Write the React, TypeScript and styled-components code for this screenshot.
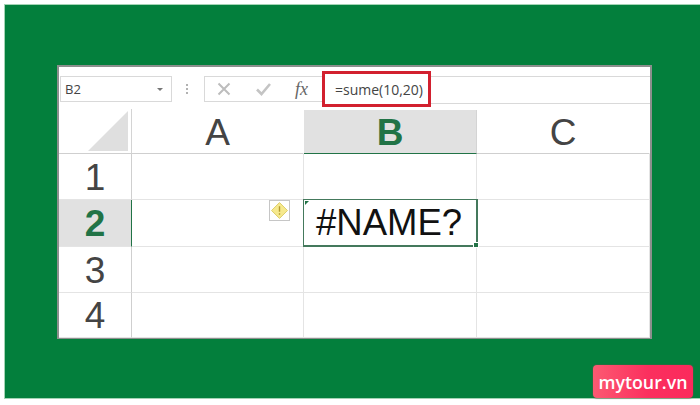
import React from 'react';
import styled, { createGlobalStyle } from 'styled-components';

const GlobalStyle = createGlobalStyle`
  html, body {
    margin: 0;
    padding: 0;
    background: #fff;
  }
`;

const Page = styled.div`
  box-sizing: border-box;
  width: 700px;
  height: 405px;
  padding: 4px 0 0 4px;
  background: #fff;
  overflow: hidden;
`;

const Banner = styled.div`
  position: relative;
  box-sizing: border-box;
  height: 395px;
  padding: 60px 44px 0 52px;
  background: #037f3c;
  border: 1px solid #a3d4b4;
  border-right: 0;
`;

const Sheet = styled.div`
  box-sizing: border-box;
  width: 595px;
  height: 274px;
  display: flex;
  flex-direction: column;
  background: #fff;
  border: 1px solid #8c8f8d;
  border-width: 2px 2px 1px 2px;
`;

const FormulaBar = styled.div`
  height: 42px;
  padding-top: 9px;
  box-sizing: border-box;
  display: flex;
  align-items: flex-start;
  flex: none;
  font-family: 'Open Sans', 'Liberation Sans', sans-serif;
`;

const NameBox = styled.div`
  box-sizing: border-box;
  width: 112px;
  height: 26px;
  margin-left: 1px;
  padding: 0 8px 0 4px;
  display: flex;
  align-items: center;
  justify-content: space-between;
  border: 1px solid #d9d9d9;
  font-size: 13px;
  color: #444;
`;

const Caret = styled.span`
  width: 0;
  height: 0;
  border-left: 3px solid transparent;
  border-right: 3px solid transparent;
  border-top: 3px solid #777;
`;

const Grip = styled.svg`
  width: 3px;
  height: 10px;
  margin: 8px 15px 0 14px;
  flex: none;
`;

const Buttons = styled.div`
  box-sizing: border-box;
  width: 118px;
  height: 26px;
  padding: 0 0 0 12px;
  display: flex;
  align-items: center;
  gap: 25px;
  flex: none;
  border: 1px solid #d9d9d9;
  border-right: 0;
`;

const Fx = styled.span`
  margin-left: -1px;
  font-family: 'Liberation Serif', serif;
  font-style: italic;
  font-size: 18px;
  color: #666;
`;

const InputTrack = styled.div`
  position: relative;
  flex: 1;
  height: 26px;
  border-top: 1px solid #d9d9d9;
  border-bottom: 1px solid #d9d9d9;
`;

const Formula = styled.div`
  position: absolute;
  left: 0;
  top: -6px;
  box-sizing: border-box;
  width: 109px;
  height: 36px;
  padding-left: 10px;
  display: flex;
  align-items: center;
  background: #fff;
  border: 3px solid #d2202f;
  font-size: 14px;
  color: #444;
  white-space: nowrap;
`;

const Grid = styled.div`
  flex: 1;
  display: grid;
  grid-template-columns: 73px 172px 173px 1fr;
  grid-template-rows: 45px 46px 47px 46px 1fr;
  font-family: 'Liberation Sans', sans-serif;
  color: #444;
`;

const Corner = styled.div`
  display: flex;
  align-items: flex-end;
  justify-content: flex-end;
  padding: 0 3px 2px 0;
  border-right: 1px solid #d4d4d4;
  border-bottom: 1px solid #cfcfcf;
`;

const ColHead = styled.div<{ $active?: boolean }>`
  box-sizing: border-box;
  margin-top: 1px;
  padding-top: 3px;
  display: flex;
  align-items: center;
  justify-content: center;
  font-size: 37px;
  font-weight: ${(p) => (p.$active ? 700 : 400)};
  color: ${(p) => (p.$active ? '#217346' : '#444')};
  background: ${(p) => (p.$active ? '#e1e1e1' : '#fff')};
  border-right: 1px solid ${(p) => (p.$active ? '#d4d4d4' : '#fff')};
  border-bottom: 1px solid ${(p) => (p.$active ? '#217346' : '#cfcfcf')};
`;

const RowHead = styled.div<{ $active?: boolean }>`
  box-sizing: border-box;
  padding-top: 2px;
  display: flex;
  align-items: center;
  justify-content: center;
  font-size: 37px;
  font-weight: ${(p) => (p.$active ? 700 : 400)};
  color: ${(p) => (p.$active ? '#217346' : '#444')};
  background: ${(p) => (p.$active ? '#e1e1e1' : '#fff')};
  border-right: 1px solid ${(p) => (p.$active ? '#217346' : '#cfcfcf')};
  border-bottom: 1px solid #e4e4e4;
`;

const Cell = styled.div`
  position: relative;
  border-right: 1px solid #e4e4e4;
  border-bottom: 1px solid #e4e4e4;
`;

const Warning = styled.div`
  position: absolute;
  top: 0;
  right: 13px;
  box-sizing: border-box;
  width: 21px;
  height: 21px;
  display: flex;
  align-items: center;
  justify-content: center;
  background: #fff;
  border: 1px solid #c6c6c6;
`;

const SelectedCell = styled.div`
  position: relative;
  z-index: 1;
  box-sizing: border-box;
  margin: -1px 0 0 -1px;
  width: 175px;
  height: 48px;
  padding-left: 12px;
  display: flex;
  align-items: center;
  border: 1px solid #44795c;
  border-bottom-width: 2px;
  border-right-width: 2px;
  font-size: 36.5px;
  color: #111;
  background: #fff;
`;

const ErrorTick = styled.span`
  position: absolute;
  left: 1px;
  top: 1px;
  width: 0;
  height: 0;
  border-top: 4px solid #217346;
  border-right: 4px solid transparent;
`;

const FillHandle = styled.span`
  position: absolute;
  right: -3px;
  bottom: -3px;
  width: 4px;
  height: 4px;
  background: #217346;
  border: 1px solid #fff;
`;

const Badge = styled.div`
  position: absolute;
  right: 7px;
  bottom: 0;
  box-sizing: border-box;
  width: 100px;
  height: 33px;
  display: flex;
  align-items: center;
  justify-content: center;
  border-radius: 4px;
  background: linear-gradient(90deg, #fc5a72 0%, #fb2f5e 55%, #fb2a5c 100%);
  box-shadow: 0 0 1px 1px rgba(90, 90, 70, 0.45);
  font-family: 'Open Sans', 'Liberation Sans', sans-serif;
  font-size: 17.8px;
  font-weight: 600;
  color: #fff;
`;

const columns = ['A', 'B', 'C'];
const rows = [1, 2, 3, 4];

const App: React.FC = () => (
  <Page>
    <GlobalStyle />
    <Banner>
      <Sheet>
        <FormulaBar>
          <NameBox>
            B2
            <Caret />
          </NameBox>
          <Grip viewBox="0 0 3 10">
            <path d="M0 1h3M0 5h3M0 9h3" stroke="#999" strokeWidth="1.4" strokeDasharray="2 1" />
          </Grip>
          <Buttons>
            <svg width="14" height="14" viewBox="0 0 14 14">
              <path d="M1.5 1.5l11 11M12.5 1.5l-11 11" stroke="#bdbdbd" strokeWidth="2" fill="none" />
            </svg>
            <svg width="15" height="14" viewBox="0 0 15 14">
              <path d="M1 7.5l4.5 4.5L14 2" stroke="#c4c4c4" strokeWidth="2.6" fill="none" />
            </svg>
            <Fx>fx</Fx>
          </Buttons>
          <InputTrack>
            <Formula>=sume(10,20)</Formula>
          </InputTrack>
        </FormulaBar>
        <Grid>
          <Corner>
            <svg width="40" height="40" viewBox="0 0 40 40">
              <path d="M40 0v40H0z" fill="#dfdfdf" />
            </svg>
          </Corner>
          {columns.map((c) => (
            <ColHead key={c} $active={c === 'B'}>
              {c}
            </ColHead>
          ))}
          {rows.map((r) => (
            <React.Fragment key={r}>
              <RowHead $active={r === 2}>{r}</RowHead>
              {columns.map((c) => {
                if (r === 2 && c === 'B') {
                  return (
                    <SelectedCell key={c}>
                      <ErrorTick />
                      #NAME?
                      <FillHandle />
                    </SelectedCell>
                  );
                }
                return (
                  <Cell key={c}>
                    {r === 2 && c === 'A' ? (
                      <Warning>
                        <svg width="17" height="17" viewBox="0 0 16 16">
                          <path d="M8 0.5L15.5 8 8 15.5 0.5 8z" fill="#f6e98e" stroke="#d9c95c" strokeWidth="0.8" />
                          <path d="M8 4v5.2M8 10.6v1.4" stroke="#b59b2e" strokeWidth="1.3" />
                        </svg>
                      </Warning>
                    ) : null}
                  </Cell>
                );
              })}
            </React.Fragment>
          ))}
        </Grid>
      </Sheet>
      <Badge>mytour.vn</Badge>
    </Banner>
  </Page>
);

export default App;
